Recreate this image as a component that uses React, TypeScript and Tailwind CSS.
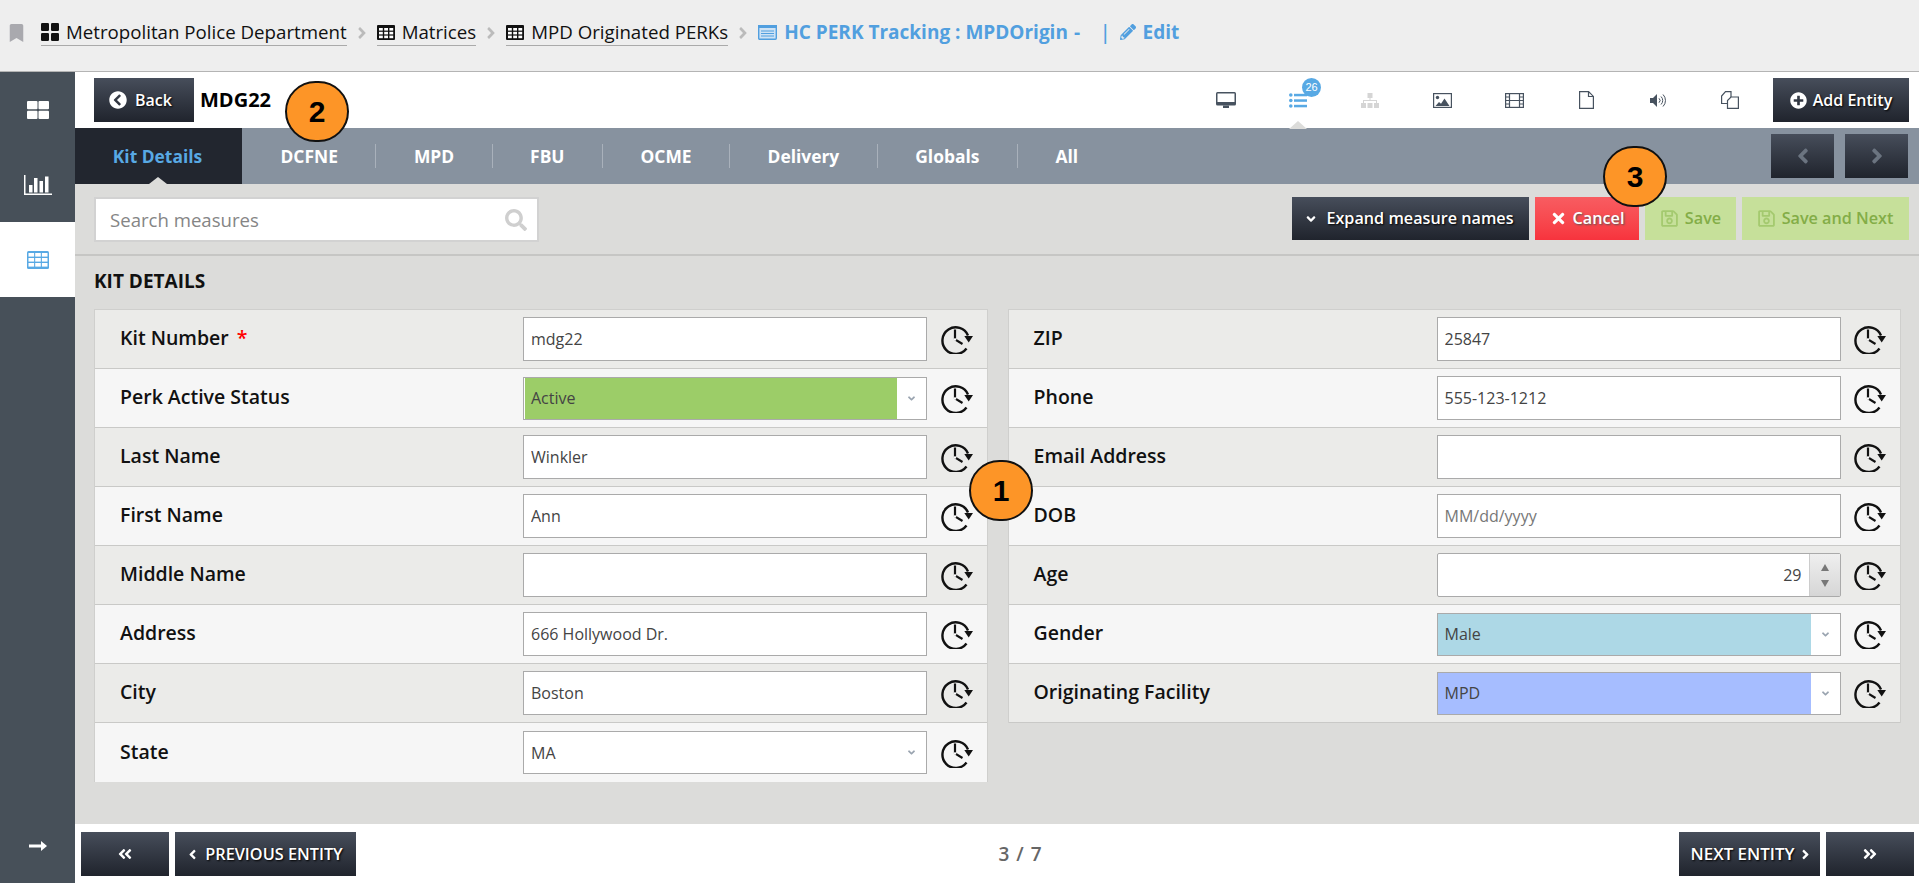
import {
  FaAngleDoubleLeft,
  FaAngleDoubleRight,
  FaAngleDown,
  FaAngleLeft,
  FaAngleRight,
  FaBookmark,
  FaChevronCircleLeft,
  FaPencilAlt,
  FaPlusCircle,
  FaSearch,
  FaTimes,
  FaRegSave,
} from 'react-icons/fa'

const darkBtn = 'bg-gradient-to-b from-[#474e5b] to-[#20242d] text-white [text-shadow:1px_1px_2px_#000]'

type Field = { label: string; value?: string; placeholder?: string; required?: boolean; kind?: 'select' | 'number'; bg?: string; inset?: boolean }

const leftFields: Field[] = [
  { label: 'Kit Number', value: 'mdg22', required: true },
  { label: 'Perk Active Status', value: 'Active', kind: 'select', bg: 'bg-[#9ccd68]', inset: true },
  { label: 'Last Name', value: 'Winkler' },
  { label: 'First Name', value: 'Ann' },
  { label: 'Middle Name', value: '' },
  { label: 'Address', value: '666 Hollywood Dr.' },
  { label: 'City', value: 'Boston' },
  { label: 'State', value: 'MA', kind: 'select' },
]

const rightFields: Field[] = [
  { label: 'ZIP', value: '25847' },
  { label: 'Phone', value: '555-123-1212' },
  { label: 'Email Address', value: '' },
  { label: 'DOB', placeholder: 'MM/dd/yyyy' },
  { label: 'Age', value: '29', kind: 'number' },
  { label: 'Gender', value: 'Male', kind: 'select', bg: 'bg-[#add8e6]' },
  { label: 'Originating Facility', value: 'MPD', kind: 'select', bg: 'bg-[#a6bdff]' },
]

const tabs = ['DCFNE', 'MPD', 'FBU', 'OCME', 'Delivery', 'Globals', 'All']

const GridIcon = ({ className = '' }: { className?: string }) => (
  <svg viewBox="0 0 18 18" className={className} fill="currentColor">
    <rect x="0" y="0" width="8" height="8" rx="1.2" />
    <rect x="10" y="0" width="8" height="8" rx="1.2" />
    <rect x="0" y="10" width="8" height="8" rx="1.2" />
    <rect x="10" y="10" width="8" height="8" rx="1.2" />
  </svg>
)

const TableIcon = ({ className = '' }: { className?: string }) => (
  <svg viewBox="0 0 18 15" className={className}>
    <rect x="0" y="0" width="18" height="15" rx="1" fill="#111" />
    {[2, 7.2, 12.4].map((x) =>
      [3, 6.8, 10.6].map((y) => <rect key={`${x}-${y}`} x={x} y={y} width="3.8" height="2.6" fill="#fff" />),
    )}
  </svg>
)

const HistoryIcon = () => (
  <svg viewBox="0 0 32 30" className="w-[32px] h-[30px]" fill="none" stroke="#111">
    <path d="M25.5 24.500A13.300 13.300 0 1 1 27 11.500" strokeWidth="2.4" />
    <path d="M23.300 12h8.700l-4.300 6.500z" fill="#111" stroke="none" />
    <path d="M14 5.500V15.500l7.500 4.500" strokeWidth="2.2" />
    <circle cx="14" cy="15.500" r="1.300" fill="#fff" stroke="none" />
  </svg>
)

function Badge({ n, className }: { n: number; className: string }) {
  return (
    <div className={`absolute z-10 w-[64px] h-[61px] rounded-full bg-[#fd9527] border-2 border-[#111] flex items-center justify-center text-[30px] font-bold text-black font-['Liberation_Sans',sans-serif] ${className}`}>
      {n}
    </div>
  )
}

function Crumb({ icon, text }: { icon: React.ReactNode; text: string }) {
  return (
    <span className="flex items-center gap-[7px] h-[27px] border-b border-[#aaa] text-[18.7px] text-[#111]">
      {icon}
      {text}
    </span>
  )
}

const Sep = () => (
  <span className="h-[27px] px-[10px] flex items-center">
    <FaAngleRight className="w-[10px] h-[18px] text-[#bbb]" />
  </span>
)

function FieldRow({ field, odd, divider }: { field: Field; odd: boolean; divider: boolean }) {
  return (
    <div className={`flex items-center h-[59px] ${divider ? 'border-b' : ''} border-[#c9c9c7] ${odd ? 'bg-[#ebebe9]' : 'bg-[#f6f6f6]'}`}>
      <div className="w-[428px] pl-[25px] pb-[2px] text-[19.5px] font-semibold text-[#111]">
        {field.label}
        {field.required && <span className="ml-[8px] text-[#f00]">*</span>}
      </div>
      <FieldInput field={field} />
      <div className="flex-1 flex justify-center">
        <HistoryIcon />
      </div>
    </div>
  )
}

function FieldInput({ field }: { field: Field }) {
  if (field.kind === 'select') {
    return (
      <div className="w-[404px] h-[43px] flex border border-[#aaa] bg-white text-[16px] text-[#444]">
        <div className={`flex-1 flex items-center ${field.inset ? 'ml-[1px] pl-[6px]' : 'pl-[7px]'} ${field.bg ?? ''}`}>{field.value}</div>
        <div className="w-[29px] flex items-center justify-center">
          <FaAngleDown className="w-[11px] h-[11px] text-[#9aa4b0]" />
        </div>
      </div>
    )
  }
  if (field.kind === 'number') {
    return (
      <div className="w-[404px] h-[44px] flex border border-[#aaa] rounded-[2px] bg-white text-[16px] text-[#444]">
        <div className="flex-1 flex items-center justify-end pr-[7px]">{field.value}</div>
        <div className="w-[31px] flex flex-col items-center justify-center gap-[9px] border-l border-[#ccc] bg-gradient-to-b from-[#efefef] to-[#d6d6d6]">
          <span className="w-0 h-0 border-x-[4px] border-x-transparent border-b-[7px] border-b-[#777]" />
          <span className="w-0 h-0 border-x-[4px] border-x-transparent border-t-[7px] border-t-[#777]" />
        </div>
      </div>
    )
  }
  return (
    <input
      readOnly
      value={field.value ?? ''}
      placeholder={field.placeholder}
      className="w-[404px] h-[44px] border border-[#aaa] bg-white px-[7px] text-[16px] text-[#444] placeholder:text-[#777] outline-none"
    />
  )
}

function FieldTable({ fields, closed }: { fields: Field[]; closed?: boolean }) {
  return (
    <div className="flex-1 self-start border border-b-0 border-[#cfcfcd]">
      {fields.map((f, i) => (
        <FieldRow key={f.label} field={f} odd={i % 2 === 0} divider={closed || i < fields.length - 1} />
      ))}
    </div>
  )
}

const IconSlot = ({ children }: { children: React.ReactNode }) => (
  <div className="relative w-[72px] flex items-center justify-center">{children}</div>
)

function TopIcons() {
  const slate = '#47525f'
  return (
    <div className="flex items-center mr-[7px]">
      <IconSlot>
        {/* monitor */}
        <svg viewBox="0 0 20 17" className="w-[20px] h-[17px]">
          <rect x="0" y="0" width="20" height="13.500" rx="1.500" fill={slate} />
          <rect x="1.500" y="1.500" width="17" height="8.500" fill="#fff" />
          <rect x="7" y="13.500" width="6" height="2.500" fill={slate} />
        </svg>
      </IconSlot>
      <IconSlot>
        {/* list + count */}
        <div className="relative w-[18px] h-[15px]">
          <svg viewBox="0 0 18 15" className="w-[18px] h-[15px] text-[#58a9e4]" fill="currentColor">
            <circle cx="1.800" cy="2" r="1.800" />
            <circle cx="1.800" cy="7.500" r="1.800" />
            <circle cx="1.800" cy="13" r="1.800" />
            <rect x="5" y="0.800" width="13" height="2.500" />
            <rect x="5" y="6.300" width="13" height="2.500" />
            <rect x="5" y="11.800" width="13" height="2.500" />
          </svg>
          <span className="absolute left-[13px] top-[-15px] w-[19px] h-[19px] rounded-full bg-[#58a9e4] text-white text-[11px] flex items-center justify-center font-['Liberation_Sans',sans-serif]">
            26
          </span>
          <span className="absolute left-0 top-[28px] w-0 h-0 border-x-[9px] border-x-transparent border-b-[8px] border-b-[#dcdcda]" />
        </div>
      </IconSlot>
      <IconSlot>
        {/* sitemap */}
        <svg viewBox="0 0 18 15" className="w-[18px] h-[15px]" fill="#d5d5d5">
          <rect x="6.500" y="0" width="5" height="5" />
          <rect x="8.500" y="5" width="1" height="3" />
          <rect x="2.500" y="7" width="13" height="1" />
          <rect x="2" y="7" width="1" height="3" />
          <rect x="15" y="7" width="1" height="3" />
          <rect x="0" y="10" width="5" height="5" />
          <rect x="6.500" y="10" width="5" height="5" />
          <rect x="13" y="10" width="5" height="5" />
        </svg>
      </IconSlot>
      <IconSlot>
        {/* picture */}
        <svg viewBox="0 0 19 15" className="w-[19px] h-[15px]">
          <rect x="0.600" y="0.600" width="17.800" height="13.800" fill="#fff" stroke={slate} strokeWidth="1.200" />
          <circle cx="4.500" cy="4.500" r="1.700" fill={slate} />
          <path d="M2.500 13l3.500-4 2 1.800 3.500-5.300 5 7.500z" fill={slate} />
        </svg>
      </IconSlot>
      <IconSlot>
        {/* film */}
        <svg viewBox="0 0 19 15" className="w-[19px] h-[15px]" fill="none" stroke={slate} strokeWidth="1.200">
          <rect x="0.600" y="0.600" width="17.800" height="13.800" />
          <path d="M4.500 1v13M14.500 1v13M4.500 7.500h10M1 4h3.500M1 7.500h3.500M1 11h3.500M14.500 4H18M14.500 7.500H18M14.500 11H18" />
        </svg>
      </IconSlot>
      <IconSlot>
        {/* page */}
        <svg viewBox="0 0 15 18" className="w-[15px] h-[18px]" fill="none" stroke={slate} strokeWidth="1.200">
          <path d="M0.600 0.600h9l4.800 4.800v12H0.600zM9.500 1v4.500H14" />
        </svg>
      </IconSlot>
      <IconSlot>
        {/* speaker */}
        <svg viewBox="0 0 17 15" className="w-[17px] h-[15px]" fill="none" stroke={slate} strokeWidth="1">
          <path d="M0 5h3l4-4v13l-4-4H0z" fill={slate} stroke="none" />
          <path d="M9 5.300a3 3 0 0 1 0 4.400M11 3.500a5.500 5.500 0 0 1 0 8M13 1.500a8.500 8.500 0 0 1 0 12" />
        </svg>
      </IconSlot>
      <IconSlot>
        {/* copies */}
        <svg viewBox="0 0 18 18" className="w-[18px] h-[18px]" fill="#fff" stroke={slate} strokeWidth="1.200">
          <path d="M4.500 0.600h5.500v5.500l-3.500 6.400H0.600V5z" />
          <path d="M10 6h7.400v11.400H6.500V9.500z" />
        </svg>
      </IconSlot>
    </div>
  )
}

export default function App() {
  return (
    <div className="relative w-full h-screen overflow-hidden flex flex-col bg-white font-['Open_Sans',sans-serif]">
      {/* breadcrumb bar */}
      <div className="h-[72px] shrink-0 flex items-start pt-[19px] pl-[9px] bg-[#eeeeee] border-b border-[#b4b4b4]">
        <FaBookmark className="w-[15px] h-[18px] mt-[5px] mr-[17px] text-[#a9a9ae]" />
        <Crumb icon={<GridIcon className="w-[18px] h-[18px] text-[#111]" />} text="Metropolitan Police Department" />
        <Sep />
        <Crumb icon={<TableIcon className="w-[18px] h-[15px]" />} text="Matrices" />
        <Sep />
        <Crumb icon={<TableIcon className="w-[18px] h-[15px]" />} text="MPD Originated PERKs" />
        <Sep />
        <span className="flex items-center h-[26px] text-[19px] font-bold text-[#519fdf] whitespace-pre">
          <svg viewBox="0 0 19 15" className="w-[19px] h-[15px] mr-[7px]">
            <rect x="0.700" y="0.700" width="17.600" height="13.600" rx="1" fill="#cfe3f5" stroke="#519fdf" strokeWidth="1.400" />
            <rect x="0" y="0" width="19" height="3" fill="#519fdf" />
            <path d="M3 6h13M3 8.500h13M3 11h13" stroke="#519fdf" strokeWidth="1.200" />
          </svg>
          HC PERK Tracking : MPDOrigin
          <span className="ml-[6px]">-</span>
          <span className="ml-[20px] font-semibold">|</span>
          <FaPencilAlt className="ml-[9px] mr-[7px] w-[16px] h-[16px]" />
          Edit
        </span>
      </div>

      <div className="flex flex-1 min-h-0">
        {/* side nav */}
        <nav className="w-[75px] shrink-0 flex flex-col bg-[#475059]">
          <div className="h-[75px] flex items-center justify-center">
            <svg viewBox="0 0 22 18" className="w-[22px] h-[18px]" fill="#fff">
              <rect x="0" y="0" width="10.500" height="8.300" rx="1" />
              <rect x="11.500" y="0" width="10.500" height="8.300" rx="1" />
              <rect x="0" y="9.700" width="10.500" height="8.300" rx="1" />
              <rect x="11.500" y="9.700" width="10.500" height="8.300" rx="1" />
            </svg>
          </div>
          <div className="h-[75px] flex items-center justify-center">
            <svg viewBox="0 0 28 20" className="w-[28px] h-[20px]" fill="#fff">
              <rect x="0" y="0" width="1.500" height="20" />
              <rect x="0" y="18.500" width="28" height="1.500" />
              <rect x="5" y="10" width="3.500" height="7.500" />
              <rect x="10" y="3" width="3.500" height="14.500" />
              <rect x="15.500" y="6" width="3.500" height="11.500" />
              <rect x="21" y="1.500" width="3.500" height="16" />
            </svg>
          </div>
          <div className="h-[75px] flex items-center justify-center bg-white">
            <svg viewBox="0 0 22 18" className="w-[22px] h-[18px]">
              <rect width="22" height="18" rx="1.500" fill="#58a9e4" />
              {[1.500, 8.200, 14.900].map((x) =>
                [2, 7, 12].map((y) => <rect key={`${x}-${y}`} x={x} y={y} width="5.600" height="3.600" fill="#fff" />),
              )}
            </svg>
          </div>
          <div className="mt-auto h-[60px] pb-[14px] flex items-center justify-center">
            <svg viewBox="0 0 18 10" className="w-[18px] h-[10px]" fill="#fff">
              <rect x="0" y="3.500" width="13" height="3" />
              <path d="M12 0l6 5-6 5z" />
            </svg>
          </div>
        </nav>

        <main className="flex-1 min-w-0 flex flex-col bg-[#dcdcda]">
          {/* header */}
          <div className="h-[56px] shrink-0 flex items-center bg-white pl-[19px] pr-[10px]">
            <button className={`w-[100px] h-[44px] flex items-center gap-[8px] pl-[15px] text-[16px] font-semibold ${darkBtn}`}>
              <FaChevronCircleLeft className="w-[18px] h-[18px]" />
              Back
            </button>
            <span className="ml-[6px] text-[20px] font-bold text-black">MDG22</span>
            <div className="ml-auto flex items-center">
              <TopIcons />
              <button className={`w-[136px] h-[44px] flex items-center justify-center gap-[6px] text-[16px] font-semibold ${darkBtn}`}>
                <FaPlusCircle className="w-[17px] h-[17px]" />
                Add Entity
              </button>
            </div>
          </div>

          {/* tabs */}
          <div className="h-[56px] shrink-0 flex items-center bg-[#87929f] pr-[11px]">
            <div className="relative w-[167px] h-full flex items-center justify-center pr-[2px] bg-[#22262f] text-[17.4px] font-bold text-[#58a9e4]">
              Kit Details
              <span className="absolute bottom-0 left-[74px] w-0 h-0 border-x-[9px] border-x-transparent border-b-[7px] border-b-[#dcdcda]" />
            </div>
            <div className="flex items-center pl-[1px]">
              {tabs.map((t, i) => (
                <span
                  key={t}
                  className={`h-[24px] flex items-center px-[37.5px] text-[17.4px] font-bold text-white ${i < tabs.length - 1 ? 'border-r border-[#a9b1bb]' : ''}`}
                >
                  {t}
                </span>
              ))}
            </div>
            <div className="ml-auto flex gap-[11px]">
              <button className={`w-[63px] h-[44px] flex items-center justify-center ${darkBtn}`}>
                <FaAngleLeft className="w-[24px] h-[24px] text-[#6b7480]" />
              </button>
              <button className={`w-[63px] h-[44px] flex items-center justify-center ${darkBtn}`}>
                <FaAngleRight className="w-[24px] h-[24px] text-[#6b7480]" />
              </button>
            </div>
          </div>

          {/* toolbar */}
          <div className="h-[72px] shrink-0 flex items-start pt-[13px] pl-[19px] pr-[10px] border-b-2 border-b-[#c6c6c4]">
            <div className="w-[445px] h-[45px] flex items-center justify-between pl-[14px] pr-[10px] bg-white border-2 border-[#d2d2d2]">
              <input placeholder="Search measures" className="flex-1 text-[18.6px] text-[#555] placeholder:text-[#858585] outline-none" />
              <FaSearch className="w-[22px] h-[22px] text-[#cfcfcf]" />
            </div>
            <div className="ml-auto flex gap-[6px] h-[43px] text-[16.2px] font-semibold">
              <button className={`w-[237px] flex items-center justify-center gap-[8px] pr-[3px] ${darkBtn}`}>
                <FaAngleDown className="w-[14px] h-[14px]" />
                Expand measure names
              </button>
              <button className="w-[104px] flex items-center justify-center gap-[6px] bg-gradient-to-b from-[#f85c61] to-[#f7333d] text-white [text-shadow:1px_1px_2px_#555]">
                <FaTimes className="w-[17px] h-[17px]" />
                Cancel
              </button>
              <button className="w-[91px] flex items-center justify-center gap-[6px] bg-[#c6e09a] text-[#83ad47]">
                <FaRegSave className="w-[19px] h-[19px] text-[#a4c96f]" />
                Save
              </button>
              <button className="w-[167px] flex items-center justify-center gap-[6px] pr-[1px] bg-[#c6e09a] text-[#83ad47]">
                <FaRegSave className="w-[19px] h-[19px] text-[#a4c96f]" />
                Save and Next
              </button>
            </div>
          </div>

          {/* form */}
          <div className="flex-1 min-h-0 pl-[19px] pr-[18px]">
            <h2 className="h-[53px] flex items-center pb-[2px] text-[19px] font-bold text-[#111]">KIT DETAILS</h2>
            <div className="flex gap-[20px]">
              <FieldTable fields={leftFields} />
              <FieldTable fields={rightFields} closed />
            </div>
          </div>

          {/* pager */}
          <div className="h-[59px] shrink-0 flex items-start pt-[8px] pl-[6px] pr-[5px] bg-white">
            <button className={`w-[88px] h-[44px] flex items-center justify-center ${darkBtn}`}>
              <FaAngleDoubleLeft className="w-[16px] h-[16px]" />
            </button>
            <button className={`ml-[6px] w-[181px] h-[44px] flex items-center justify-center gap-[5px] pr-[3px] text-[16.3px] font-semibold ${darkBtn}`}>
              <FaAngleLeft className="w-[15px] h-[15px]" />
              PREVIOUS ENTITY
            </button>
            <span className="flex-1 h-[44px] flex items-center justify-center pl-[6px] text-[19px] font-semibold tracking-[1px] text-[#666]">3 / 7</span>
            <button className={`w-[141px] h-[44px] flex items-center justify-center gap-[3px] pl-[4px] text-[16.9px] font-semibold ${darkBtn}`}>
              NEXT ENTITY
              <FaAngleRight className="w-[15px] h-[15px]" />
            </button>
            <button className={`ml-[6px] w-[88px] h-[44px] flex items-center justify-center ${darkBtn}`}>
              <FaAngleDoubleRight className="w-[16px] h-[16px]" />
            </button>
          </div>
        </main>
      </div>

      <Badge n={1} className="left-[969px] top-[460px]" />
      <Badge n={2} className="left-[285px] top-[81px]" />
      <Badge n={3} className="left-[1603px] top-[146px]" />
    </div>
  )
}
